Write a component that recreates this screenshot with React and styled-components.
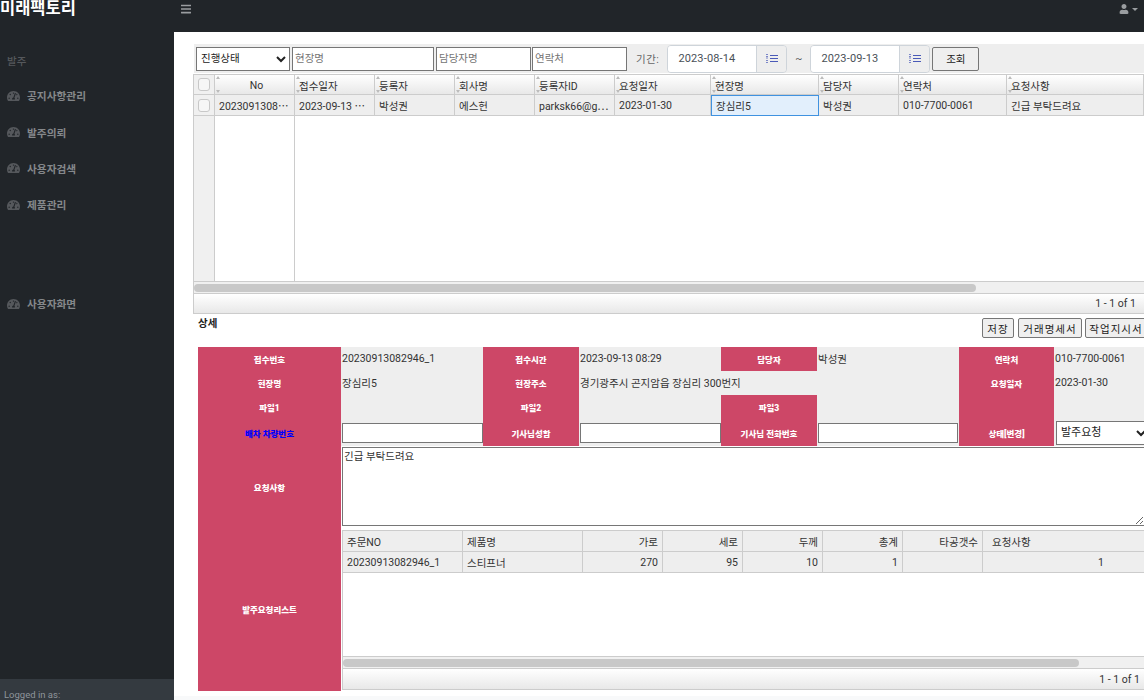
import styled, { createGlobalStyle } from "styled-components";
import { FaBars, FaTachometerAlt, FaUser } from "react-icons/fa";

const GlobalStyle = createGlobalStyle`
  html, body {
    margin: 0;
    height: 100%;
    overflow: hidden;
    background: #fff;
  }
  * {
    box-sizing: border-box;
  }
  body, input, select, textarea, button {
    font-family: Roboto, "Noto Sans CJK KR", sans-serif;
    font-size: 10.5px;
    color: #333;
  }
`;

const Page = styled.div`
  display: flex;
  width: 1144px;
  height: 700px;
  overflow: hidden;
`;

const Sidebar = styled.aside`
  flex: 0 0 174px;
  display: flex;
  flex-direction: column;
  background: #212529;
`;

const Logo = styled.div`
  height: 18px;
  line-height: 18px;
  font-size: 16.5px;
  font-weight: 700;
  color: #fff;
  white-space: nowrap;
`;

const SideNav = styled.nav`
  flex: 1;
  padding-top: 25.5px;
`;

const SideHeading = styled.div`
  height: 34px;
  display: flex;
  align-items: center;
  padding-left: 7px;
  font-size: 10.5px;
  font-weight: 500;
  color: #55585c;
`;

const SideItem = styled.a`
  height: 36.4px;
  display: flex;
  align-items: center;
  gap: 7px;
  margin-top: ${(p) => p.$gap || 0}px;
  padding-left: 7px;
  font-size: 10.7px;
  font-weight: 700;
  color: #85888b;

  svg {
    width: 13px;
    height: 12px;
    color: #55585c;
  }
`;

const SideFooter = styled.div`
  flex: 0 0 21px;
  padding: 10px 0 0 4px;
  line-height: 11px;
  background: #343a40;
  color: #8f959b;
  font-size: 9.5px;
  overflow: hidden;
`;

const Content = styled.div`
  flex: 1;
  min-width: 0;
  display: flex;
  flex-direction: column;
  overflow: hidden;
`;

const TopBar = styled.header`
  flex: 0 0 32px;
  display: flex;
  justify-content: space-between;
  padding: 3px 6px 0 7px;
  background: #212529;
  color: #9a9da0;
`;

const MenuButton = styled.div`
  svg {
    display: block;
    width: 10px;
    height: 12px;
  }
`;

const UserMenu = styled.div`
  display: flex;
  align-items: center;
  gap: 3px;
  height: 12px;

  svg {
    width: 10px;
    height: 10px;
  }

  &::after {
    content: "";
    border-top: 3px solid #9a9da0;
    border-left: 3px solid transparent;
    border-right: 3px solid transparent;
  }
`;

const Main = styled.main`
  flex: 1;
  min-height: 0;
  padding: 12px 0 0 19px;
  background: #fff;
  overflow: hidden;
`;

const BottomStrip = styled.div`
  flex: 0 0 4px;
  background: #f8f9fa;
`;

const SearchBar = styled.div`
  display: flex;
  align-items: center;
  height: 29px;
  margin-left: 1px;
  padding-left: 2px;
  background: #eee;
`;

const SearchSelect = styled.select`
  width: 94px;
  height: 24px;
  padding: 0;
  background: #fff;
  border: 1px solid #767676;
  border-radius: 0;
  color: #222;
`;

const SearchInput = styled.input`
  width: ${(p) => p.$w}px;
  height: 24px;
  margin-left: ${(p) => p.$ml || 2}px;
  padding: 0 2px;
  background: #fff;
  border: 1px solid #767676;
  border-radius: 0;

  &::placeholder {
    color: #757575;
  }
`;

const PeriodLabel = styled.span`
  margin: 0 8px 0 9px;
  color: #666;
  letter-spacing: 0.5px;
`;

const DateGroup = styled.div`
  display: flex;
  width: 120px;
  height: 28px;
  border: 1px solid #ced4da;
  border-radius: 4px;
  overflow: hidden;
`;

const DateInput = styled.input`
  width: 88px;
  border: 0;
  padding: 0 10px;
  background: #fff;
  color: #495057;
  font-size: 11px;
  letter-spacing: 0.15px;
`;

const DateAddon = styled.div`
  flex: 1;
  display: flex;
  align-items: center;
  justify-content: center;
  background: #eee;
  border-left: 1px solid #ced4da;
  color: #4a5ab8;

  svg {
    width: 12px;
    height: 11px;
  }
`;

const Tilde = styled.span`
  width: 23px;
  text-align: center;
  color: #555;
`;

const ActionButton = styled.button`
  height: ${(p) => p.$h || 20}px;
  margin-left: ${(p) => p.$ml || 0}px;
  margin-right: ${(p) => p.$mr || 0}px;
  padding: 0;
  width: ${(p) => p.$w}px;
  flex: 0 0 auto;
  background: #efefef;
  border: 1px solid #767676;
  border-radius: 2px;
  color: #222;
  letter-spacing: ${(p) => p.$ls || 0}px;
  white-space: nowrap;
`;

const GridFrame = styled.section`
  width: 951px;
  margin-top: 1px;
  border-left: 1px solid #ccc;
  border-top: 1px solid #ccc;
`;

const GridRow = styled.div`
  display: grid;
  grid-template-columns: 21px 80px 80px 80px 80px 80px 96px 108px 80px 108px 1fr;
  height: ${(p) => (p.$head ? 20 : 21)}px;
  border-bottom: 1px solid #ccc;
  background: ${(p) =>
    p.$head ? "linear-gradient(#fff, #e8e8e8)" : "#eee"};
`;

const HeadCell = styled.div`
  position: relative;
  display: flex;
  align-items: center;
  justify-content: ${(p) => (p.$center ? "center" : "flex-start")};
  padding: 2px 0 0 4px;
  border-right: 1px solid #ccc;
  white-space: nowrap;

  &::before,
  &::after {
    content: "";
    position: absolute;
    left: 1px;
    border-left: 2px solid transparent;
    border-right: 2px solid transparent;
  }
  &::before {
    top: 1px;
    border-bottom: 3px solid #bbb;
  }
  &::after {
    bottom: 1px;
    border-top: 3px solid #bbb;
  }
`;

const Cell = styled.div`
  display: flex;
  align-items: center;
  padding-left: 4px;
  border-right: 1px solid #ccc;
  white-space: nowrap;
  overflow: hidden;
  ${(p) =>
    p.$selected &&
    `
    background: #e2effc;
    border: 1px solid #3f92e0;
    margin-bottom: -1px;
  `}
`;

const CheckCell = styled.div`
  display: flex;
  align-items: center;
  justify-content: center;
  background: #f0f0f0;
  border-right: 1px solid #ccc;
`;

const CheckBox = styled.span`
  width: 12px;
  height: 13px;
  background: #f6f6f6;
  border: 1px solid #c8c8c8;
  border-radius: 3px;
`;

const GridFiller = styled.div`
  display: flex;
  height: 166px;
  border-bottom: 1px solid #ccc;
`;

const FillerCheck = styled.div`
  width: 21px;
  background: #f0f0f0;
  border-right: 1px solid #ccc;
`;

const FillerFrozen = styled.div`
  width: 80px;
  border-right: 1px solid #ccc;
`;

const ScrollTrack = styled.div`
  flex: 0 0 12px;
  height: 12px;
  padding: 2px 0 1px;
  background: #f0f0f0;
  border-bottom: 1px solid #ccc;
`;

const ScrollThumb = styled.div`
  width: ${(p) => p.$w}px;
  height: 8px;
  border-radius: 4px;
  background: #c8c8c8;
`;

const Pager = styled.div`
  display: flex;
  flex: 0 0 auto;
  align-items: center;
  justify-content: flex-end;
  height: ${(p) => p.$h}px;
  padding-right: ${(p) => p.$pr}px;
  background: linear-gradient(#fff, #e8e8e8);
  border-bottom: 1px solid #ccc;
  color: #333;
`;

const DetailHead = styled.div`
  display: flex;
  align-items: flex-start;
  height: 29px;
  margin: 4px 0 0 5px;
`;

const DetailTitle = styled.h3`
  flex: 1;
  margin: 0;
  font-size: 10.5px;
  line-height: 12px;
  font-weight: 700;
  color: #222;
`;

const DetailGrid = styled.section`
  display: grid;
  grid-template-columns: 143px 142px 96px 142px 96px 142px 95px 90px;
  grid-template-rows: 24px 24px 24px 27px 81px 164px;
  width: 946px;
  margin-left: 5px;
`;

const Label = styled.div`
  display: flex;
  align-items: center;
  justify-content: center;
  background: #cd4767;
  color: ${(p) => p.$color || "#fff"};
  font-size: 8.5px;
  font-weight: 900;
  white-space: nowrap;
`;

const Value = styled.div`
  display: flex;
  align-items: center;
  padding: 0 0 ${(p) => (p.$flush ? 0 : 2)}px 1px;
  background: #eee;
  color: #333;
  white-space: nowrap;
  grid-column: ${(p) => p.$span || "auto"};
`;

const InlineInput = styled.input`
  width: ${(p) => p.$w}px;
  height: 20px;
  padding: 0 2px;
  background: #fff;
  border: 1px solid #767676;
  border-radius: 0;
`;

const StatusSelect = styled.select`
  width: 94px;
  flex: 0 0 auto;
  height: 24px;
  margin-left: 1px;
  padding: 0;
  background: #fff;
  border: 1px solid #767676;
  border-radius: 0;
  color: #222;
  font-size: 11px;
`;

const MemoCell = styled.div`
  grid-column: 2 / -1;
  padding: 1px 0 0 1px;
`;

const MemoArea = styled.textarea`
  display: block;
  width: 803px;
  height: 79px;
  margin: 0;
  padding: 0 1px;
  background: #fff;
  border: 1px solid #767676;
  border-radius: 0;
  color: #333;
  font-size: 10.5px;
`;

const OrderCell = styled.div`
  grid-column: 2 / -1;
  padding: 3px 0 0 1px;
`;

const OrderFrame = styled.div`
  height: 160px;
  border-left: 1px solid #ccc;
  border-top: 1px solid #ccc;
  display: flex;
  flex-direction: column;
`;

const OrderRow = styled.div`
  display: grid;
  grid-template-columns: 120px 120px 80px 80px 80px 80px 80px 125px;
  flex: 0 0 21px;
  background: #eee;
  border-bottom: 1px solid #ccc;
`;

const OrderCol = styled.div`
  display: flex;
  align-items: center;
  justify-content: ${(p) => (p.$right ? "flex-end" : "flex-start")};
  padding-right: ${(p) => (p.$right ? 4 : 0)}px;
  padding-left: ${(p) => p.$pl || (p.$right ? 0 : 4)}px;
  border-right: ${(p) => (p.$plain ? "0" : "1px solid #ccc")};
  white-space: nowrap;
`;

const OrderBody = styled.div`
  flex: 1;
  border-bottom: 1px solid #ccc;
`;

const topCols = ["No", "접수일자", "등록자", "회사명", "등록자ID", "요청일자", "현장명", "담당자", "연락처", "요청사항"];
const topRow = ["2023091308⋯", "2023-09-13 ⋯", "박성권", "에스헌", "parksk66@g⋯", "2023-01-30", "장심리5", "박성권", "010-7700-0061", "긴급 부탁드려요"];

const orderCols = [
  { name: "주문NO" },
  { name: "제품명" },
  { name: "가로", right: true },
  { name: "세로", right: true },
  { name: "두께", right: true },
  { name: "총계", right: true },
  { name: "타공갯수", right: true },
  { name: "요청사항", pl: 9, plain: true },
];
const orderRow = [
  { text: "20230913082946_1" },
  { text: "스티프너" },
  { text: "270", right: true },
  { text: "95", right: true },
  { text: "10", right: true },
  { text: "1", right: true },
  { text: "", right: true },
  { text: "1", right: true, plain: true },
];

const menus = [
  { name: "공지사항관리" },
  { name: "발주의뢰" },
  { name: "사용자검색" },
  { name: "제품관리" },
  { name: "사용자화면", gap: 62.6 },
];

const DateListIcon = () => (
  <svg viewBox="0 0 12 11" fill="none" stroke="currentColor">
    <path d="M4 2.5h8M4 5.5h8M4 8.5h8" />
    <path d="M1 1v3M1 4.5v2M1 7v3" strokeWidth="1.4" strokeDasharray="1 1" />
  </svg>
);

const App = () => {
  return (
    <Page>
      <GlobalStyle />
      <Sidebar>
        <Logo>미래팩토리</Logo>
        <SideNav>
          <SideHeading>발주</SideHeading>
          {menus.map((menu) => (
            <SideItem key={menu.name} $gap={menu.gap}>
              <FaTachometerAlt />
              {menu.name}
            </SideItem>
          ))}
        </SideNav>
        <SideFooter>Logged in as:</SideFooter>
      </Sidebar>

      <Content>
        <TopBar>
          <MenuButton>
            <FaBars />
          </MenuButton>
          <UserMenu>
            <FaUser />
          </UserMenu>
        </TopBar>

        <Main>
          <SearchBar>
            <SearchSelect>
              <option>진행상태</option>
            </SearchSelect>
            <SearchInput $w={142} placeholder="현장명" />
            <SearchInput $w={95} placeholder="담당자명" />
            <SearchInput $w={95} $ml={1} placeholder="연락처" />
            <PeriodLabel>기간:</PeriodLabel>
            <DateGroup>
              <DateInput defaultValue="2023-08-14" />
              <DateAddon>
                <DateListIcon />
              </DateAddon>
            </DateGroup>
            <Tilde>~</Tilde>
            <DateGroup>
              <DateInput defaultValue="2023-09-13" />
              <DateAddon>
                <DateListIcon />
              </DateAddon>
            </DateGroup>
            <ActionButton $w={47} $h={24} $ml={2}>
              조회
            </ActionButton>
          </SearchBar>

          <GridFrame>
            <GridRow $head>
              <CheckCell>
                <CheckBox />
              </CheckCell>
              {topCols.map((col, index) => (
                <HeadCell key={col} $center={index === 0}>
                  {col}
                </HeadCell>
              ))}
            </GridRow>
            <GridRow>
              <CheckCell>
                <CheckBox />
              </CheckCell>
              {topRow.map((text, index) => (
                <Cell key={index} $selected={index === 6}>
                  {text}
                </Cell>
              ))}
            </GridRow>
            <GridFiller>
              <FillerCheck />
              <FillerFrozen />
            </GridFiller>
            <ScrollTrack>
              <ScrollThumb $w={782} />
            </ScrollTrack>
            <Pager $h={20} $pr={8}>
              1 - 1 of 1
            </Pager>
          </GridFrame>

          <DetailHead>
            <DetailTitle>상세</DetailTitle>
            <ActionButton $w={32} $ls={1}>
              저장
            </ActionButton>
            <ActionButton $w={64} $ml={4} $ls={1}>
              거래명세서
            </ActionButton>
            <ActionButton $w={62} $ml={3} $mr={-3} $ls={1}>
              작업지시서
            </ActionButton>
          </DetailHead>

          <DetailGrid>
            <Label>접수번호</Label>
            <Value>20230913082946_1</Value>
            <Label>접수시간</Label>
            <Value>2023-09-13 08:29</Value>
            <Label>담당자</Label>
            <Value>박성권</Value>
            <Label>연락처</Label>
            <Value>010-7700-0061</Value>

            <Label>현장명</Label>
            <Value>장심리5</Value>
            <Label>현장주소</Label>
            <Value $span="span 3">경기광주시 곤지암읍 장심리 300번지</Value>
            <Label>요청일자</Label>
            <Value>2023-01-30</Value>

            <Label>파일1</Label>
            <Value />
            <Label>파일2</Label>
            <Value />
            <Label>파일3</Label>
            <Value />
            <Label />
            <Value />

            <Label $color="#0000ff">배차 차량번호</Label>
            <Value $flush>
              <InlineInput $w={141} />
            </Value>
            <Label>기사님성함</Label>
            <Value $flush>
              <InlineInput $w={141} />
            </Value>
            <Label>기사님 전화번호</Label>
            <Value $flush>
              <InlineInput $w={140} />
            </Value>
            <Label>상태[변경]</Label>
            <Value $flush>
              <StatusSelect>
                <option>발주요청</option>
              </StatusSelect>
            </Value>

            <Label>요청사항</Label>
            <MemoCell>
              <MemoArea defaultValue="긴급 부탁드려요" />
            </MemoCell>

            <Label>발주요청리스트</Label>
            <OrderCell>
              <OrderFrame>
                <OrderRow>
                  {orderCols.map((col) => (
                    <OrderCol
                      key={col.name}
                      $right={col.right}
                      $pl={col.pl}
                      $plain={col.plain}
                    >
                      {col.name}
                    </OrderCol>
                  ))}
                </OrderRow>
                <OrderRow>
                  {orderRow.map((cell, index) => (
                    <OrderCol key={index} $right={cell.right} $plain={cell.plain}>
                      {cell.text}
                    </OrderCol>
                  ))}
                </OrderRow>
                <OrderBody />
                <ScrollTrack>
                  <ScrollThumb $w={736} />
                </ScrollTrack>
                <Pager $h={21} $pr={4}>
                  1 - 1 of 1
                </Pager>
              </OrderFrame>
            </OrderCell>
          </DetailGrid>
        </Main>
        <BottomStrip />
      </Content>
    </Page>
  );
};

export default App;
